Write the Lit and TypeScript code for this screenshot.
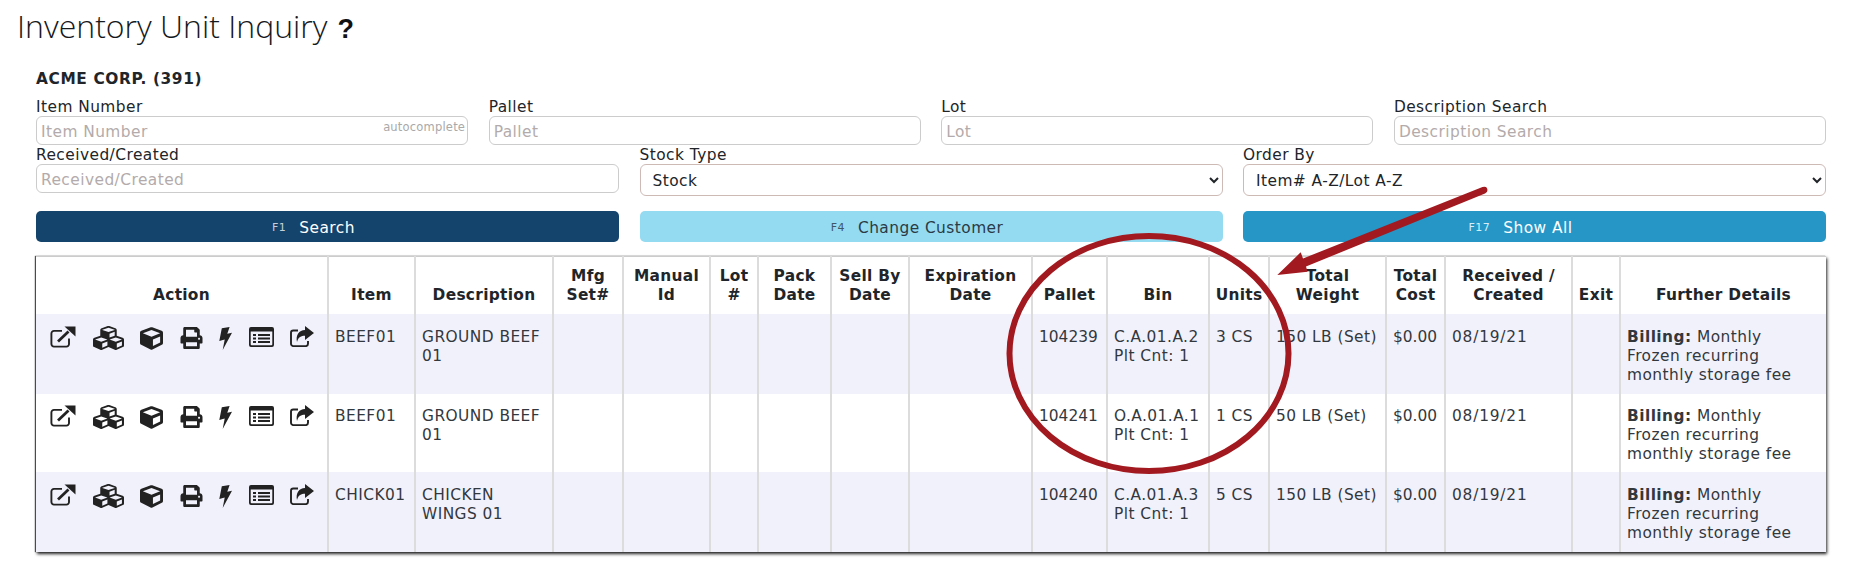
import { LitElement, html, css, svg } from 'lit';
import { customElement } from 'lit/decorators.js';

const COL_EDGES = [36, 328, 415, 553, 623, 710, 758, 831, 909, 1032, 1107, 1209, 1269, 1386, 1445, 1572, 1620, 1826];

const HEADERS = [
  ['Action'], ['Item'], ['Description'], ['Mfg', 'Set#'], ['Manual', 'Id'], ['Lot', '#'], ['Pack', 'Date'],
  ['Sell By', 'Date'], ['Expiration', 'Date'], ['Pallet'], ['Bin'], ['Units'], ['Total', 'Weight'], ['Total', 'Cost'],
  ['Received /', 'Created'], ['Exit'], ['Further Details'],
];

const ROWS = [
  { item: 'BEEF01', desc: 'GROUND BEEF 01', pallet: '104239', bin: 'C.A.01.A.2', units: '3 CS', weight: '150 LB (Set)' },
  { item: 'BEEF01', desc: 'GROUND BEEF 01', pallet: '104241', bin: 'O.A.01.A.1', units: '1 CS', weight: '50 LB (Set)' },
  { item: 'CHICK01', desc: 'CHICKEN WINGS 01', pallet: '104240', bin: 'C.A.01.A.3', units: '5 CS', weight: '150 LB (Set)' },
];

// action icons, left to right
const ICONS = [
  svg`<svg class="ic" style="width:26px;height:22px" viewBox="0 0 26 22"><path d="M19 12.500V18a2.600 2.600 0 0 1-2.600 2.600H4A2.600 2.600 0 0 1 1.400 18V7.500A2.600 2.600 0 0 1 4 4.900h8" fill="none" stroke="currentColor" stroke-width="1.900"/><path d="M8 15.500 18.500 5.500" fill="none" stroke="currentColor" stroke-width="2.800"/><path d="M14.500 0.500H25.500V10.500Z" fill="currentColor"/></svg>`,
  svg`<svg class="ic" style="width:31px;height:24px" viewBox="0 32 512 448" preserveAspectRatio="none"><path fill="currentColor" d="M488.600 250.200L392 214V105.500c0-15-9.300-28.400-23.400-33.700l-100-37.500c-8.100-3.100-17.100-3.100-25.300 0l-100 37.500c-14.100 5.300-23.400 18.700-23.400 33.700V214l-96.600 36.200C9.300 255.500 0 268.900 0 283.900V394c0 13.600 7.700 26.100 19.900 32.200l100 50c10.100 5.100 22.100 5.100 32.200 0l103.900-52 103.900 52c10.100 5.100 22.100 5.100 32.200 0l100-50c12.200-6.100 19.900-18.600 19.900-32.200V283.900c0-15-9.300-28.400-23.400-33.700zM358 214.800l-85 31.900v-68.200l85-37v73.300zM154 104.100l102-38.200 102 38.200v.6l-102 41.400-102-41.400v-.6zm84 291.100l-85 42.500v-79.100l85-38.800v75.400zm0-112l-102 41.400-102-41.400v-.6l102-38.200 102 38.200v.6zm240 112l-85 42.500v-79.100l85-38.800v75.400zm0-112l-102 41.400-102-41.400v-.6l102-38.200 102 38.200v.6z"/></svg>`,
  svg`<svg class="ic cube" style="width:23px;height:23px" viewBox="0 0 512 512"><path fill="currentColor" d="M239.100 6.300l-208 78c-18.700 7-31.100 25-31.100 45v225.100c0 18.200 10.300 34.800 26.500 42.900l208 104c13.500 6.800 29.400 6.800 42.900 0l208-104c16.300-8.100 26.500-24.800 26.500-42.900V129.300c0-20-12.400-37.900-31.100-44.900l-208-78C262 2.200 250 2.200 239.100 6.300zM256 68.400l192 72v1.100l-192 78-192-78v-1.100l192-72zm32 356V275.500l160-65v133.900l-160 80z"/></svg>`,
  svg`<svg class="ic cube" style="width:23px;height:22px" viewBox="0 0 512 512"><path fill="currentColor" d="M448 192V77.250c0-8.490-3.370-16.620-9.370-22.630L393.370 9.370c-6-6-14.140-9.370-22.630-9.370H96C78.330 0 64 14.330 64 32v160c-35.350 0-64 28.650-64 64v112c0 8.840 7.160 16 16 16h48v96c0 17.670 14.330 32 32 32h320c17.670 0 32-14.330 32-32v-96h48c8.840 0 16-7.160 16-16V256c0-35.350-28.650-64-64-64zm-64 256H128v-96h256v96zm0-224H128V64h192v48c0 8.840 7.160 16 16 16h48v96zm48 72c-13.250 0-24-10.750-24-24 0-13.260 10.750-24 24-24s24 10.740 24 24c0 13.250-10.750 24-24 24z"/></svg>`,
  svg`<svg class="ic cube" style="width:13px;height:23px" viewBox="0 0 13 23"><path fill="currentColor" d="M2.800 1.200 10.600 0 8.300 6.800 13 5.800 3.700 23 5.700 12.600 0.300 13.900Z"/></svg>`,
  svg`<svg class="ic cube" style="width:25px;height:20px" viewBox="0 0 25 20"><path fill="currentColor" fill-rule="evenodd" d="M2 0H23A2 2 0 0 1 25 2V18A2 2 0 0 1 23 20H2A2 2 0 0 1 0 18V2A2 2 0 0 1 2 0ZM1.700 4.500V17.300A1 1 0 0 0 2.700 18.300H22.300A1 1 0 0 0 23.300 17.300V4.500Z"/><path fill="currentColor" d="M4 7H7V9H4ZM9 7H21V9H9ZM4 10.500H7V12.500H4ZM9 10.500H21V12.500H9ZM4 14H7V16H4ZM9 14H21V16H9Z"/></svg>`,
  svg`<svg class="ic" style="width:24px;height:21px" viewBox="0 0 24 21"><path d="M18 15V17.800A2.300 2.300 0 0 1 15.700 20.100H3.300A2.300 2.300 0 0 1 1 17.800V6.800A2.300 2.300 0 0 1 3.300 4.500H8" fill="none" stroke="currentColor" stroke-width="1.900"/><path fill="currentColor" d="M15 0 24 7 15 14V9.800C11 9.800 8.500 11 7 16 5.500 9 9 4.300 15 4Z"/></svg>`,
];

@customElement('app-root')
export class AppRoot extends LitElement {
  static styles = css`
    :host {
      display: block;
      position: relative;
      height: 571px;
      overflow: hidden;
      background: #fff;
      color: #212529;
      font-family: "DejaVu Sans", Verdana, sans-serif;
      font-size: 15.4px;
      letter-spacing: 0.45px;
    }
    .title {
      display: flex;
      align-items: center;
      gap: 10px;
      margin: 0;
      padding: 7px 0 0 17px;
      height: 44px;
      box-sizing: border-box;
      font-family: "Open Sans", sans-serif;
      font-weight: 300;
      font-size: 32px;
      line-height: 44px;
      letter-spacing: 0;
      color: #16191c;
    }
    .help {
      font-family: "Liberation Sans", sans-serif;
      font-weight: 700;
      font-size: 27px;
      color: #111;
      padding-top: 6px;
    }
    .content {
      padding: 25px 23px 0 36px;
    }
    .company {
      font-weight: 700;
      line-height: 21px;
      height: 28px;
      letter-spacing: 0.6px;
    }
    .row4, .row3, .buttons {
      display: grid;
      column-gap: 20.500px;
    }
    .row4 { grid-template-columns: repeat(4, 1fr); }
    .row3, .buttons { grid-template-columns: repeat(3, 1fr); }
    .field {
      display: flex;
      flex-direction: column;
      position: relative;
    }
    label {
      display: block;
      line-height: 21px;
      height: 19px;
    }
    input, select {
      box-sizing: border-box;
      width: 100%;
      height: 29px;
      border: 1px solid #ccc;
      border-radius: 6px;
      padding: 2px 4px 0;
      font: inherit;
      letter-spacing: inherit;
      color: #212529;
      background: #fff;
      outline: none;
    }
    input::placeholder { color: #b3abab; opacity: 1; }
    select {
      height: 32px;
      border-color: #cdbab5;
      padding: 1px 8px 0;
    }
    .hint {
      position: absolute;
      right: 3px;
      top: 23px;
      font-size: 11.500px;
      letter-spacing: 0.2px;
      color: #a9a9a9;
    }
    .buttons { margin-top: 15px; }
    .btn {
      display: flex;
      align-items: center;
      justify-content: center;
      gap: 13px;
      height: 31px;
      padding: 2px 28px 0 0;
      border: 0;
      border-radius: 5px;
      font: inherit;
      letter-spacing: inherit;
    }
    .btn small { font-size: 11px; }
    .navy { background: #14446c; color: #fff; }
    .navy small { color: #c6d0da; }
    .sky { background: #94daf1; color: #2b3a45; }
    .sky small { color: #3e5866; }
    .blue { background: #2596c6; color: #fff; }
    .blue small { color: #d4effa; }
    table {
      margin-top: 14px;
      border-collapse: collapse;
      table-layout: fixed;
      width: 1790px;
      border-top: 1px solid #ccc;
      box-shadow: 1px 2px 3px #222, -1px 0 1px #555;
    }
    th, td {
      border-left: 2px solid #dcdcdc;
      padding: 0 6px;
      line-height: 19px;
      vertical-align: top;
      text-align: left;
    }
    th:first-child, td:first-child { border-left: 0; }
    th {
      height: 48px;
      padding: 0 0 9px;
      vertical-align: bottom;
      text-align: center;
      font-weight: 700;
      white-space: nowrap;
      letter-spacing: 0.3px;
    }
    td {
      height: 57px;
      padding-top: 14px;
      padding-bottom: 9px;
      color: #33383d;
    }
    tr.even td {
      padding-top: 13px;
      padding-bottom: 8px;
    }
    tr.odd td { background: #f1f1fc; }
    td.num { letter-spacing: 0; }
    td.date { letter-spacing: 0.8px; }
    td.details { padding-right: 22px; }
    .actions {
      display: flex;
      align-items: flex-start;
      margin-top: -2px;
      padding-left: 8px;
      gap: 16.500px;
      height: 25px;
      color: #222;
    }
    .ic { display: block; flex: none; }
    .cube { margin-top: 1px; }
    .overlay {
      position: absolute;
      left: 0;
      top: 0;
      pointer-events: none;
    }
  `;

  renderRow(r: (typeof ROWS)[number], i: number) {
    return html`<tr class=${i % 2 ? 'even' : 'odd'}>
      <td><div class="actions">${ICONS}</div></td>
      <td>${r.item}</td>
      <td>${r.desc}</td>
      <td></td><td></td><td></td><td></td><td></td><td></td>
      <td class="num">${r.pallet}</td>
      <td>${r.bin}<br />Plt Cnt: 1</td>
      <td>${r.units}</td>
      <td>${r.weight}</td>
      <td class="num">$0.00</td>
      <td class="date">08/19/21</td>
      <td></td>
      <td class="details"><b>Billing:</b> Monthly Frozen recurring monthly storage fee</td>
    </tr>`;
  }

  render() {
    return html`
      <h1 class="title">Inventory Unit Inquiry <span class="help">?</span></h1>
      <div class="content">
        <div class="company">ACME CORP. (391)</div>
        <div class="row4">
          <div class="field">
            <label>Item Number</label>
            <input placeholder="Item Number" />
            <span class="hint">autocomplete</span>
          </div>
          <div class="field"><label>Pallet</label><input placeholder="Pallet" /></div>
          <div class="field"><label>Lot</label><input placeholder="Lot" /></div>
          <div class="field"><label>Description Search</label><input placeholder="Description Search" /></div>
        </div>
        <div class="row3">
          <div class="field"><label>Received/Created</label><input placeholder="Received/Created" /></div>
          <div class="field"><label>Stock Type</label><select><option>Stock</option></select></div>
          <div class="field"><label>Order By</label><select><option>Item# A-Z/Lot A-Z</option></select></div>
        </div>
        <div class="buttons">
          <button class="btn navy"><small>F1</small>Search</button>
          <button class="btn sky"><small>F4</small>Change Customer</button>
          <button class="btn blue"><small>F17</small>Show All</button>
        </div>
        <table>
          <colgroup>
            ${COL_EDGES.slice(1).map((e, i) => html`<col style="width:${e - COL_EDGES[i]}px" />`)}
          </colgroup>
          <thead>
            <tr>${HEADERS.map((h) => html`<th>${h.map((l, i) => (i ? html`<br />${l}` : l))}</th>`)}</tr>
          </thead>
          <tbody>${ROWS.map((r, i) => this.renderRow(r, i))}</tbody>
        </table>
      </div>
      <svg class="overlay" width="1849" height="571" viewBox="0 0 1849 571">
        <ellipse cx="1149" cy="353.500" rx="139.500" ry="117.500" fill="none" stroke="#a2191f" stroke-width="6" />
        <path d="M1482.500 187Q1487 185.500 1487.500 190 1487.500 192.500 1485 193.500L1306 266.500 1307.500 271.700 1277.300 275 1300.700 252.300 1303 258.500Z" fill="#a2191f" />
      </svg>
    `;
  }
}
